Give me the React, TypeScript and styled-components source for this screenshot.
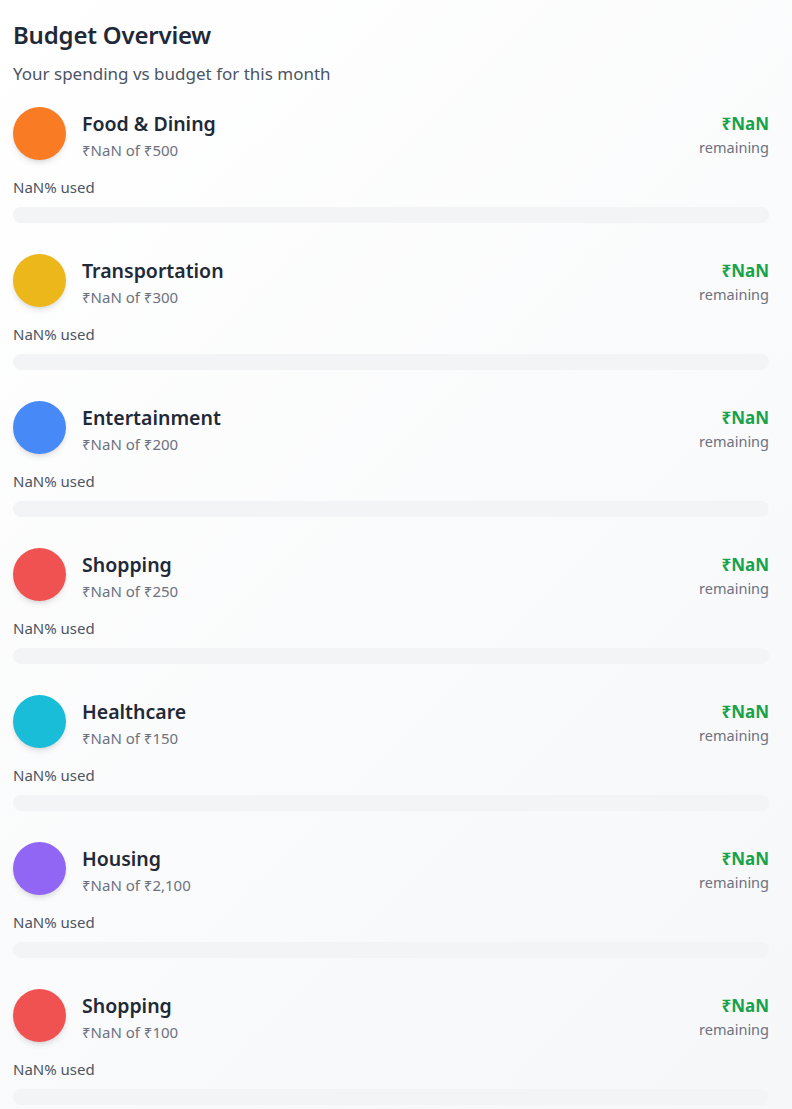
import styled, { createGlobalStyle } from "styled-components";

interface Budget {
  name: string;
  budget: string;
  color: string;
}

const budgets: Budget[] = [
  { name: "Food & Dining", budget: "₹500", color: "#f97c24" },
  { name: "Transportation", budget: "₹300", color: "#ebb71a" },
  { name: "Entertainment", budget: "₹200", color: "#478af7" },
  { name: "Shopping", budget: "₹250", color: "#f05252" },
  { name: "Healthcare", budget: "₹150", color: "#19bdd8" },
  { name: "Housing", budget: "₹2,100", color: "#9166f5" },
  { name: "Shopping", budget: "₹100", color: "#f05252" },
];

export default function App() {
  return (
    <>
      <GlobalStyle />
      <Page>
        <Title>Budget Overview</Title>
        <Subtitle>Your spending vs budget for this month</Subtitle>
        <List>
          {budgets.map((b, i) => (
            <Item key={i}>
              <ItemHeader>
                <Left>
                  <Dot color={b.color} />
                  <Info>
                    <Name>{b.name}</Name>
                    <Amount>₹NaN of {b.budget}</Amount>
                  </Info>
                </Left>
                <Right>
                  <Remaining>₹NaN</Remaining>
                  <RemainingLabel>remaining</RemainingLabel>
                </Right>
              </ItemHeader>
              <Used>NaN% used</Used>
              <Track />
            </Item>
          ))}
        </List>
      </Page>
    </>
  );
}

const GlobalStyle = createGlobalStyle`
  html, body {
    margin: 0;
    padding: 0;
  }
  body {
    font-family: "Noto Sans", "Open Sans", sans-serif;
    background: #f6f7f9;
    min-height: 100vh;
  }
`;

const Page = styled.div`
  padding: 18px 23px 0 13px;
  min-height: 1109px;
  box-sizing: border-box;
  background: linear-gradient(135deg, #ffffff 0%, #f6f7f9 100%);
`;

const Title = styled.h2`
  margin: 0;
  font-size: 24px;
  line-height: 34px;
  font-weight: 600;
  color: #1f2937;
  letter-spacing: -0.2px;
`;

const Subtitle = styled.p`
  margin: 10px 0 0;
  font-size: 17px;
  line-height: 23px;
  color: #4b5563;
`;

const List = styled.div`
  margin-top: 22px;
  display: flex;
  flex-direction: column;
  gap: 31px;
`;

const Item = styled.div`
  display: flex;
  flex-direction: column;
`;

const ItemHeader = styled.div`
  display: flex;
  justify-content: space-between;
  align-items: flex-start;
`;

const Left = styled.div`
  display: flex;
  align-items: center;
  gap: 16px;
`;

const Dot = styled.div<{ color: string }>`
  width: 53px;
  height: 53px;
  border-radius: 50%;
  background: ${(p) => p.color};
  box-shadow: 0 4px 6px -1px rgba(0, 0, 0, 0.1), 0 2px 4px -2px rgba(0, 0, 0, 0.1);
`;

const Info = styled.div`
  display: flex;
  flex-direction: column;
  gap: 3px;
  padding-top: 3px;
`;

const Name = styled.div`
  font-size: 19.5px;
  line-height: 26px;
  font-weight: 600;
  color: #1f2937;
`;

const Amount = styled.div`
  font-size: 15px;
  line-height: 20px;
  color: #6b7280;
`;

const Right = styled.div`
  display: flex;
  flex-direction: column;
  align-items: flex-end;
  gap: 2px;
  padding-top: 6px;
`;

const Remaining = styled.div`
  font-size: 17px;
  line-height: 22px;
  font-weight: 700;
  color: #16a34a;
`;

const RemainingLabel = styled.div`
  font-size: 14.5px;
  line-height: 20px;
  color: #6b7280;
`;

const Used = styled.div`
  margin-top: 17px;
  font-size: 15px;
  line-height: 20px;
  color: #4b5563;
`;

const Track = styled.div`
  margin-top: 10px;
  height: 16px;
  border-radius: 8px;
  background: #f3f4f6;
`;
